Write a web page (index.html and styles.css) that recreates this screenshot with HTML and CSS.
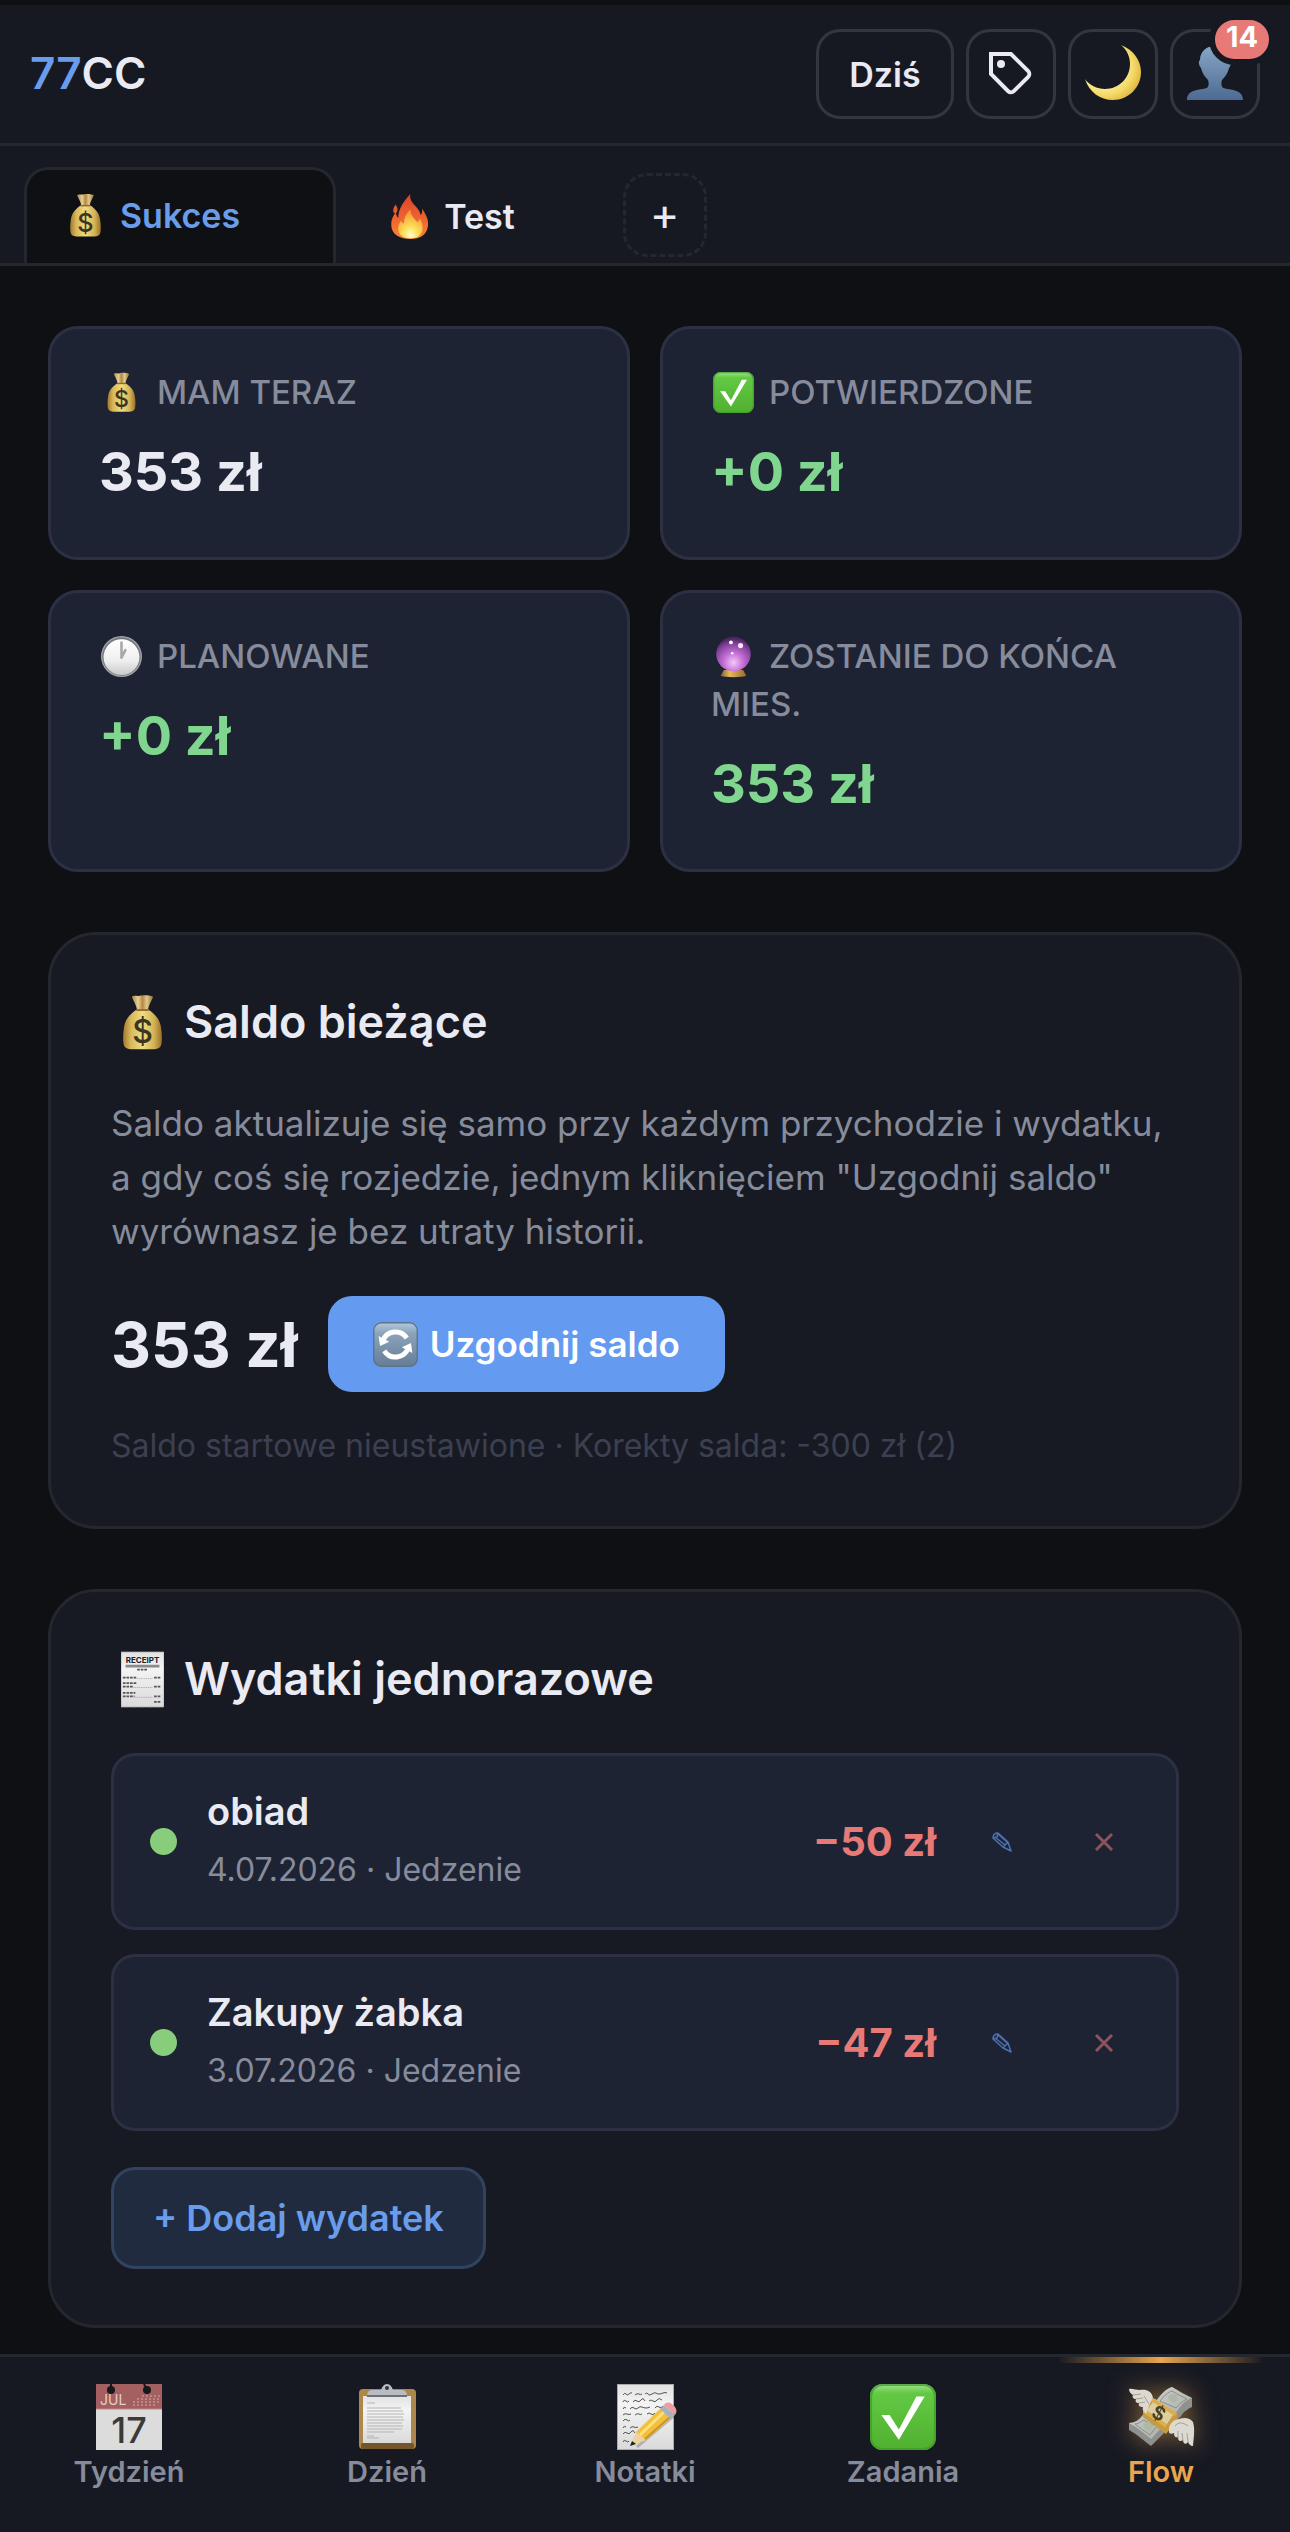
FILE: index.html
```html
<!DOCTYPE html>
<html lang="pl">

<head>
  <meta charset="UTF-8" />
  <meta name="viewport" content="width=device-width, initial-scale=1" />
  <title>77CC - Flow</title>
  <link rel="stylesheet" href="styles.css">
</head>

<body>
  <!-- Ikony używane w kilku miejscach -->
  <svg class="defs" width="0" height="0" aria-hidden="true">
    <defs>
      <linearGradient id="gBag" x1="0" x2="1" y1="0" y2="0">
        <stop offset="0" stop-color="#a37a2c" />
        <stop offset="0.2" stop-color="#d8b85c" />
        <stop offset="0.5" stop-color="#f0dc82" />
        <stop offset="0.8" stop-color="#d4b255" />
        <stop offset="1" stop-color="#9a7028" />
      </linearGradient>
      <linearGradient id="gNeck" x1="0" x2="1" y1="0" y2="0">
        <stop offset="0" stop-color="#b08848" />
        <stop offset="0.3" stop-color="#e6cf96" />
        <stop offset="0.5" stop-color="#b58a45" />
        <stop offset="0.7" stop-color="#e2c88c" />
        <stop offset="1" stop-color="#99702f" />
      </linearGradient>
      <linearGradient id="gCheck" x1="0" x2="0" y1="0" y2="1">
        <stop offset="0" stop-color="#a2e090" />
        <stop offset="0.14" stop-color="#62c944" />
        <stop offset="1" stop-color="#50b02f" />
      </linearGradient>
      <linearGradient id="gFire" x1="0" x2="0" y1="0" y2="1">
        <stop offset="0" stop-color="#d9432c" />
        <stop offset="0.6" stop-color="#f0672f" />
        <stop offset="1" stop-color="#f58a38" />
      </linearGradient>
      <radialGradient id="gFlame" cx="0.5" cy="0.9" r="0.8">
        <stop offset="0" stop-color="#fffbd8" />
        <stop offset="0.35" stop-color="#fde45c" />
        <stop offset="1" stop-color="#f59a35" />
      </radialGradient>
      <radialGradient id="gMoon" cx="0.35" cy="0.4" r="0.7">
        <stop offset="0.5" stop-color="#fbec9a" />
        <stop offset="0.75" stop-color="#f3d863" />
        <stop offset="1" stop-color="#dcb13f" />
      </radialGradient>
      <linearGradient id="gUser" x1="0" x2="0" y1="0" y2="1">
        <stop offset="0" stop-color="#86a7c6" />
        <stop offset="1" stop-color="#4d6a92" />
      </linearGradient>
      <radialGradient id="gBall" cx="0.5" cy="0.75" r="0.7">
        <stop offset="0" stop-color="#f3c8fa" />
        <stop offset="0.4" stop-color="#c570d6" />
        <stop offset="0.8" stop-color="#82409a" />
        <stop offset="1" stop-color="#4b2660" />
      </radialGradient>
      <linearGradient id="gGold" x1="0" x2="1" y1="0" y2="0">
        <stop offset="0" stop-color="#8a6128" />
        <stop offset="0.35" stop-color="#e6b95c" />
        <stop offset="1" stop-color="#96692c" />
      </linearGradient>
      <linearGradient id="gClock" x1="0" x2="0" y1="0" y2="1">
        <stop offset="0" stop-color="#ffffff" />
        <stop offset="0.6" stop-color="#efefef" />
        <stop offset="1" stop-color="#c9c9c9" />
      </linearGradient>
      <linearGradient id="gSync" x1="0" x2="0" y1="0" y2="1">
        <stop offset="0" stop-color="#b4cade" />
        <stop offset="0.25" stop-color="#8ba4bb" />
        <stop offset="1" stop-color="#647c94" />
      </linearGradient>
      <linearGradient id="gPaper" x1="0" x2="0" y1="0" y2="1">
        <stop offset="0" stop-color="#e2e2e2" />
        <stop offset="0.3" stop-color="#f4f4f4" />
        <stop offset="1" stop-color="#dadada" />
      </linearGradient>
      <linearGradient id="gBill" x1="0" x2="1" y1="0" y2="1">
        <stop offset="0" stop-color="#d8dad4" />
        <stop offset="1" stop-color="#9fa19f" />
      </linearGradient>

      <symbol id="bag" viewBox="0 0 64 64">
        <path d="M20 3c3-2 6 0 9-1s10-1 15 1c-2 5-5 9-6 15H26c-1-6-4-10-6-15z" fill="url(#gNeck)" />
        <path d="M26 17h12c9 6 14 12 15 22 1 7 1 14 0 18-1 4-5 5-9 5H20c-4 0-8-1-9-5-1-4-1-11 0-18 1-10 6-16 15-22z" fill="url(#gBag)" />
        <path d="M25 18h14" stroke="#8e6526" stroke-width="2" />
        <text x="32" y="55" text-anchor="middle" class="bag-sign">$</text>
      </symbol>

      <symbol id="check" viewBox="0 0 64 64">
        <rect x="0" y="0" width="64" height="64" rx="12" fill="url(#gCheck)" />
        <rect x="1" y="1" width="62" height="62" rx="11" fill="none" stroke="#3f9a26" stroke-width="2" opacity="0.7" />
        <path d="M11 30h8l9 14 17-32h8L28 54z" fill="#fff" />
      </symbol>

      <symbol id="pencil" viewBox="0 0 20 20">
        <path d="M1 6c0-3 2-5 5-5l10 9 3 9-8-4zM16 10l-5 5M3 5l10 8M6 2l9 8M1 6l4-1 1-4" fill="none" stroke="currentColor" stroke-width="1.5" stroke-linejoin="round" />
      </symbol>

      <symbol id="cross" viewBox="0 0 20 20">
        <path d="M2 2l16 16M18 2L2 18" stroke="currentColor" stroke-width="3" />
      </symbol>
    </defs>
  </svg>

  <header class="topbar">
    <div class="logo"><span>77</span>CC</div>
    <div class="actions">
      <button type="button" class="btn-top btn-today">Dziś</button>
      <button type="button" class="btn-top" aria-label="Etykiety">
        <svg class="icon-tag" viewBox="0 0 24 24" fill="none" stroke="currentColor" stroke-width="2">
          <path d="M20.6 13.4l-7.2 7.2a2 2 0 0 1-2.8 0L2 12V2h10l8.6 8.6a2 2 0 0 1 0 2.8z" />
          <circle cx="7" cy="7" r="2" fill="currentColor" stroke="none" />
        </svg>
      </button>
      <button type="button" class="btn-top" aria-label="Motyw">
        <svg class="icon-top" viewBox="0 0 56 56">
          <path d="M36-1c13 5 20 16 20 27 0 15-12 28-28 28C15 54 4 46 0 33c4 6 12 10 20 10 14 0 25-11 25-25 0-7-3-14-9-19z" fill="url(#gMoon)" />
        </svg>
      </button>
      <button type="button" class="btn-top" aria-label="Konto">
        <svg class="icon-top" viewBox="0 0 56 56">
          <path d="M28 0c9 0 15 6 15 14 2 1 1 6-1 8-1 5-4 9-7 12-1 3-1 6 1 8 7 2 20 1 20 12H0c0-11 13-10 20-12 2-2 2-5 1-8-3-3-6-7-7-12-2-2-3-7-1-8 0-8 6-14 15-14z" fill="url(#gUser)" />
        </svg>
        <span class="badge">14</span>
      </button>
    </div>
  </header>

  <div class="tabs">
    <button type="button" class="tab active">
      <svg class="icon-tab"><use href="#bag" /></svg>
      Sukces
    </button>
    <button type="button" class="tab">
      <svg class="icon-tab" viewBox="0 0 64 64">
        <path d="M33 0c-1 9 4 13 9 19 3 4 5 7 6 11 2-2 2-5 2-9 6 9 10 17 8 26-2 11-11 17-24 17C18 64 6 58 6 43c0-7 3-12 6-17 1 3 2 6 4 8 0-13 8-24 17-34zM12 15c3 4 4 7 2 11-3 3-6 0-5-4 0-3 2-4 3-7z" fill="url(#gFire)" />
        <path d="M33 22c1 10 6 12 10 18 2-1 3-3 4-5 4 8 5 14 2 20-3 6-9 8-16 8-9 0-17-4-17-14 0-5 2-8 4-11 1 2 2 3 4 4 0-8 3-14 9-20z" fill="url(#gFlame)" />
      </svg>
      Test
    </button>
    <button type="button" class="tab-add" aria-label="Dodaj zakładkę">+</button>
  </div>

  <main>
    <section class="stats">
      <div class="stat">
        <h3><svg class="icon-label"><use href="#bag" /></svg>MAM TERAZ</h3>
        <p>353 zł</p>
      </div>
      <div class="stat">
        <h3><svg class="icon-label"><use href="#check" /></svg>POTWIERDZONE</h3>
        <p class="plus">+0 zł</p>
      </div>
      <div class="stat">
        <h3><svg class="icon-label" viewBox="0 0 64 64">
            <circle cx="32" cy="32" r="32" fill="#a3a6ab" />
            <circle cx="32" cy="32" r="30" fill="#74787f" />
            <circle cx="32" cy="33" r="28" fill="url(#gClock)" />
            <path d="M32 10v24l6-12" fill="none" stroke="#a8a8a8" stroke-width="4" stroke-linecap="round" stroke-linejoin="round" />
          </svg>PLANOWANE</h3>
        <p class="plus">+0 zł</p>
      </div>
      <div class="stat">
        <h3><svg class="icon-label" viewBox="0 0 64 64">
            <path d="M17 53h30l5 9c-8 3-32 3-40 0z" fill="url(#gGold)" />
            <circle cx="32" cy="28" r="27" fill="url(#gBall)" />
            <circle cx="28" cy="10" r="3" fill="#fff" />
            <circle cx="43" cy="15" r="4" fill="#fbe8ff" />
            <circle cx="30" cy="27" r="2" fill="#fff" />
          </svg>ZOSTANIE DO KOŃCA MIES.</h3>
        <p class="plus">353 zł</p>
      </div>
    </section>

    <section class="panel">
      <h2><svg class="icon-title"><use href="#bag" /></svg>Saldo bieżące</h2>
      <p class="desc">Saldo aktualizuje się samo przy każdym przychodzie i wydatku, a gdy coś się rozjedzie, jednym kliknięciem "Uzgodnij saldo" wyrównasz je bez utraty historii.</p>
      <div class="balance">
        <strong>353 zł</strong>
        <button type="button" class="btn-primary">
          <svg class="icon-tab" viewBox="0 0 64 64">
            <rect x="0" y="0" width="64" height="64" rx="12" fill="url(#gSync)" />
            <rect x="1" y="1" width="62" height="62" rx="11" fill="none" stroke="#5c7590" stroke-width="2" />
            <path d="M14 27a19 19 0 0 1 34-4M50 37a19 19 0 0 1-34 4" fill="none" stroke="#fff" stroke-width="7" />
            <path d="M8 20l2 14 13-6zM56 44l-2-14-13 6z" fill="#fff" />
          </svg>
          Uzgodnij saldo
        </button>
      </div>
      <p class="note">Saldo startowe nieustawione · Korekty salda: -300 zł (2)</p>
    </section>

    <section class="panel">
      <h2><svg class="icon-title" viewBox="0 0 64 64">
          <rect x="8" y="1" width="48" height="62" fill="url(#gPaper)" />
          <path d="M8 1h48M8 63h48" stroke="#8b8b8b" stroke-width="1" stroke-dasharray="2 1" />
          <text x="32" y="14" text-anchor="middle" class="receipt-text">RECEIPT</text>
          <path d="M13 17h38" stroke="#8a8a8a" stroke-width="3" />
          <path d="M26 21h12M10 30h16M45 30h8M10 36h15M10 40h11M45 40h8M10 47h14M10 51h13M45 51h8M45 57h8" stroke="#555" stroke-width="2" stroke-dasharray="3 1" />
          <path d="M26 31h18M22 41h22M24 52h20" stroke="#999" stroke-width="1" stroke-dasharray="1 1" />
        </svg>Wydatki jednorazowe</h2>
      <ul class="expenses">
        <li>
          <span class="dot"></span>
          <div class="info">
            <h4>obiad</h4>
            <p>4.07.2026 · Jedzenie</p>
          </div>
          <span class="amount">−50 zł</span>
          <button type="button" class="btn-row edit" aria-label="Edytuj"><svg><use href="#pencil" /></svg></button>
          <button type="button" class="btn-row delete" aria-label="Usuń"><svg><use href="#cross" /></svg></button>
        </li>
        <li>
          <span class="dot"></span>
          <div class="info">
            <h4>Zakupy żabka</h4>
            <p>3.07.2026 · Jedzenie</p>
          </div>
          <span class="amount">−47 zł</span>
          <button type="button" class="btn-row edit" aria-label="Edytuj"><svg><use href="#pencil" /></svg></button>
          <button type="button" class="btn-row delete" aria-label="Usuń"><svg><use href="#cross" /></svg></button>
        </li>
      </ul>
      <button type="button" class="btn-add">+ Dodaj wydatek</button>
    </section>
  </main>

  <nav class="bottom-nav">
    <a href="#tydzien">
      <svg class="icon-nav" viewBox="0 0 66 66">
        <rect width="66" height="66" fill="#dcdcdc" />
        <rect width="66" height="25" fill="#a45f60" />
        <path d="M0 25h66" stroke="#bf8484" stroke-width="1" />
        <circle cx="15" cy="6" r="4" fill="#17181d" />
        <circle cx="51" cy="6" r="4" fill="#17181d" />
        <path d="M15 6V0M51 6l-3-6" stroke="#17181d" stroke-width="2" />
        <path d="M46 12h18M41 15h23M37 18h26M37 21h23" stroke="#bd8585" stroke-width="2" stroke-dasharray="2 2" />
        <text x="4" y="21" class="cal-month">JUL</text>
        <text x="33" y="59" text-anchor="middle" class="cal-day">17</text>
      </svg>
      Tydzień
    </a>
    <a href="#dzien">
      <svg class="icon-nav" viewBox="0 0 66 66">
        <rect x="5" y="5" width="57" height="60" rx="4" fill="#ad864c" />
        <rect x="7" y="59" width="53" height="6" rx="2" fill="#76552a" />
        <rect x="9" y="12" width="48" height="47" fill="url(#gPaper)" />
        <path d="M13 12c0-4 2-6 6-6h8c1-3 3-6 6-6s5 3 6 6h8c4 0 6 2 6 6z" fill="#b9bcc2" />
        <path d="M13 12h40" stroke="#6d7075" stroke-width="2" />
        <circle cx="33" cy="4" r="2" fill="#30343a" />
        <path d="M13 19h8M13 24h34M13 27h36M13 30h37M13 33h36M13 36h37M13 39h35M13 42h36M13 45h35M13 48h27M13 52h7M13 54h12" stroke="#b4b4b4" stroke-width="1" />
      </svg>
      Dzień
    </a>
    <a href="#notatki">
      <svg class="icon-nav" viewBox="0 0 66 66">
        <rect x="5" y="0" width="57" height="66" fill="#a9aaab" />
        <rect x="6" y="1" width="55" height="64" fill="url(#gPaper)" />
        <path d="M11 11q2-3 3-1t3 0 3-1M23 11q2-2 4-1t3 0M33 10q2-2 3 0t4 0 4-1 3 1 4-1 4 0M11 18q1-3 3-1t3 0M21 18q2-3 4-1t4-1 4 1M37 17q2-2 4 0t4-1 5 0M11 25q1-3 3-1M18 25q2-3 4-1t4 0 4-1 4 1 4-1M43 24q2-3 4-1t4-1M11 31q2-2 4-1t4 0M23 31q2-2 4-1t3 0M35 30q2-2 4 0t4-1M11 37q2-3 4-1t3 0M11 44q1-3 3-1M18 44q2-2 4-1t4 0M11 50q2-3 4-1t4-1 4 1M11 58q1-3 3-1t3 0" fill="none" stroke="#555" stroke-width="1" />
        <path d="M24 62l36-34 4 4-38 32z" fill="#000" opacity="0.2" />
        <path d="M18 62l6-14 10 8z" fill="#ecd3a0" />
        <path d="M18 62l2-5 4 3z" fill="#222" />
        <path d="M24 48l25-24 10 10-25 22z" fill="#f0c03e" />
        <path d="M28 51l25-24" stroke="#ffe07a" stroke-width="3" />
        <path d="M33 55l25-22" stroke="#cf9326" stroke-width="2" />
        <path d="M48 25l4-4 11 10-4 4z" fill="#a8b1c0" />
        <path d="M52 21c2-3 5-3 8-1 4 3 6 7 3 11z" fill="#ec9da2" />
      </svg>
      Notatki
    </a>
    <a href="#zadania">
      <svg class="icon-nav"><use href="#check" /></svg>
      Zadania
    </a>
    <a href="#flow" class="active">
      <svg class="icon-nav" viewBox="0 0 66 66">
        <path d="M28 17c5-6 9-12 16-14 7 4 13 8 20 11v9c-4 2-8 4-11 9L23 62C16 57 9 50 1 46v-7c6 0 10-3 13-7z" fill="#8f918f" />
        <path d="M28 17c5-6 9-12 16-14 7 4 13 8 20 11-6 2-10 6-14 12L23 55C17 50 9 43 1 39c6 0 10-3 13-7z" fill="url(#gBill)" />
        <path d="M32 17c4-5 8-9 12-10 6 4 11 6 15 8-4 2-8 5-11 9zM15 36c-2 2-5 4-8 4 5 4 11 8 15 11l7-9z" fill="none" stroke="#898f86" stroke-width="1" />
        <ellipse cx="45" cy="14" rx="5" ry="4" fill="#aeb8a6" transform="rotate(25 45 14)" />
        <ellipse cx="20" cy="42" rx="5" ry="4" fill="#aeb8a6" transform="rotate(25 20 42)" />
        <path d="M25 14l24 15v7l-11 14-23-17V27z" fill="#c79a3e" />
        <path d="M27 15l20 13-10 15-20-14z" fill="#ddcf9f" />
        <path d="M25 14l24 15-2 3-24-15zM18 26l21 14-2 3-20-13z" fill="#dcae4b" />
        <text x="31" y="36" text-anchor="middle" class="bill-sign" transform="rotate(28 31 29)">$</text>
        <path d="M25 14c-1-7-7-9-13-8C8 6 4 4 1 5c0 3 2 5 4 6-1 2 0 4 3 4-1 3 0 4 3 4-1 3 1 4 4 4-1 3 1 5 3 7 2-6 4-11 7-16z" fill="#dcd9d0" />
        <path d="M5 11l8-1M8 15l7-1M11 19l6-1M16 12l5 8" stroke="#a5a096" stroke-width="1" fill="none" />
        <path d="M41 48c-1-8 4-12 10-13 6-2 11-1 14 3 2 7 1 14 0 24-3 0-4-2-5-4-2 3-5 2-5-2-3 2-5 1-5-3-3 1-4-1-4-4-2 1-5 1-5-1z" fill="#dcd9d0" />
        <path d="M60 58l-1-9M55 57l-1-8M50 54v-7M47 42c3-4 8-4 13 0" stroke="#a5a096" stroke-width="1" fill="none" />
      </svg>
      Flow
    </a>
  </nav>
</body>

</html>
```
FILE: styles.css
```css
* {
  margin: 0;
  padding: 0;
  box-sizing: border-box;
  font-family: Inter, 'Liberation Sans', sans-serif;
}

body {
  background-color: #0f1014;
  color: #e9eaf2;
  min-height: 100vh;
  display: flex;
  flex-direction: column;
  padding-top: 5px;
}

svg {
  display: block;
  flex-shrink: 0;
  overflow: visible;
}

.defs {
  position: absolute;
}

button {
  border: none;
  background: none;
  color: inherit;
  cursor: pointer;
}

/* Nagłówek */
.topbar {
  display: flex;
  justify-content: space-between;
  align-items: center;
  padding: 24px 30px;
  background-color: #171922;
  border-bottom: 3px solid #25272f;
}

.logo {
  padding-bottom: 3px;
  font-size: 44px;
  font-weight: 600;
}

.logo span {
  color: #6a9cec;
}

.actions {
  display: flex;
  gap: 12px;
}

.btn-top {
  position: relative;
  display: flex;
  justify-content: center;
  align-items: center;
  width: 90px;
  height: 90px;
  border: 3px solid #34353f;
  border-radius: 24px;
}

.btn-today {
  width: 138px;
  font-size: 34px;
  font-weight: 600;
}

.icon-tag {
  width: 48px;
  height: 48px;
}

.icon-top {
  width: 56px;
  height: 56px;
}

.badge {
  position: absolute;
  top: -18px;
  right: -18px;
  min-width: 66px;
  height: 51px;
  border: 6px solid #171922;
  border-radius: 26px;
  background-color: #e77a77;
  color: #fff;
  font-size: 29px;
  font-weight: 700;
  line-height: 34px;
  text-align: center;
}

/* Zakładki */
.tabs {
  display: flex;
  align-items: center;
  gap: 12px;
  padding: 21px 24px 0;
  background-color: #171922;
  border-bottom: 3px solid #25272f;
}

.tab {
  display: flex;
  align-items: center;
  gap: 12px;
  height: 96px;
  padding: 0 93px 0 36px;
  border: 3px solid transparent;
  border-bottom: none;
  border-radius: 24px 24px 0 0;
  font-size: 34px;
  font-weight: 600;
}

.tab.active {
  padding-bottom: 3px;
  background-color: #0f1014;
  border-color: #25272f;
  color: #6a9cec;
}

.icon-tab {
  width: 45px;
  height: 45px;
}

.tab-add {
  width: 84px;
  height: 84px;
  padding-bottom: 4px;
  border: 3px dashed #25272f;
  border-radius: 24px;
  font-size: 45px;
}

main {
  display: flex;
  flex-direction: column;
  gap: 60px;
  padding: 60px 48px 24px;
}

/* Kafelki z podsumowaniem */
.stats {
  display: grid;
  grid-template-columns: 1fr 1fr;
  gap: 30px;
}

.stat {
  padding: 39px 48px 54px;
  background-color: #1e2333;
  border: 3px solid #2c3042;
  border-radius: 30px;
}

.stat h3 {
  font-size: 33px;
  font-weight: 500;
  line-height: 48px;
  color: #878c9d;
}

.stat p {
  margin-top: 24px;
  font-size: 54px;
  font-weight: 700;
  line-height: 63px;
}

.stat .plus {
  color: #80d68e;
}

.icon-label {
  display: inline-block;
  width: 41px;
  height: 41px;
  margin: 0 15px 0 2px;
  vertical-align: -9px;
}

/* Panele */
.panel {
  padding: 57px 60px 56px;
  background-color: #171a23;
  border: 3px solid #25272f;
  border-radius: 48px;
}

.panel h2 {
  display: flex;
  align-items: center;
  gap: 13px;
  margin-bottom: 44px;
  padding-left: 3px;
  font-size: 45px;
  font-weight: 600;
  line-height: 60px;
}

.icon-title {
  width: 57px;
  height: 57px;
}

.desc {
  font-size: 35px;
  line-height: 54px;
  color: #878c9d;
}

.balance {
  display: flex;
  align-items: center;
  gap: 30px;
  margin: 38px 0 30px;
}

.balance strong {
  font-size: 62px;
  font-weight: 700;
}

.btn-primary {
  display: flex;
  align-items: center;
  gap: 12px;
  height: 96px;
  padding: 0 45px;
  border-radius: 24px;
  background-color: #649bf0;
  color: #fff;
  font-size: 35px;
  font-weight: 600;
}

.note {
  font-size: 32px;
  line-height: 48px;
  color: #3c4050;
}

.expenses {
  display: flex;
  flex-direction: column;
  gap: 24px;
  list-style: none;
}

.expenses li {
  display: flex;
  align-items: center;
  gap: 18px;
  padding: 27px 30px 27px 36px;
  background-color: #1e2333;
  border: 3px solid #2c3042;
  border-radius: 24px;
}

.dot {
  width: 27px;
  height: 27px;
  margin-right: 12px;
  border-radius: 50%;
  background-color: #87cd7b;
}

.info {
  flex: 1;
}

.info h4 {
  font-size: 38px;
  font-weight: 600;
  line-height: 56px;
}

.info p {
  font-size: 32px;
  line-height: 61px;
  color: #878c9d;
}

.amount {
  margin-right: 6px;
  font-size: 40px;
  font-weight: 700;
  color: #e77a77;
}

.btn-row {
  display: flex;
  justify-content: center;
  align-items: center;
  width: 84px;
  height: 84px;
}

.btn-row svg {
  width: 20px;
  height: 20px;
}

.edit {
  color: #4d70b0;
}

.delete {
  color: #8c535c;
}

.btn-add {
  display: block;
  height: 102px;
  margin-top: 36px;
  padding: 0 39px;
  border: 3px solid #32435f;
  border-radius: 24px;
  background-color: #212b3f;
  color: #6a9cec;
  font-size: 36px;
  font-weight: 600;
}

/* Dolna nawigacja */
.bottom-nav {
  position: sticky;
  bottom: 0;
  display: flex;
  margin-top: auto;
  background-color: #171922;
  border-top: 3px solid #25272f;
}

.bottom-nav a {
  position: relative;
  flex: 1;
  display: flex;
  flex-direction: column;
  align-items: center;
  gap: 4px;
  padding: 27px 0 42px;
  color: #878c9d;
  font-size: 29px;
  font-weight: 600;
  line-height: 36px;
  text-decoration: none;
}

.bottom-nav .active {
  color: #e8a64e;
}

.bottom-nav .active::before {
  content: '';
  position: absolute;
  top: 0;
  left: 10%;
  width: 80%;
  height: 6px;
  background: linear-gradient(to right, transparent, #e8a64e, transparent);
}

.bottom-nav .active svg {
  filter: drop-shadow(0 0 12px rgba(232, 166, 78, 0.5));
}

.icon-nav {
  width: 66px;
  height: 66px;
}

/* Znaki wewnątrz ikon */
.bag-sign {
  font-size: 36px;
  font-weight: 500;
  fill: #3d3520;
}

.receipt-text {
  font-size: 9px;
  font-weight: 700;
  fill: #222;
}

.cal-month {
  font-size: 14px;
  font-weight: 400;
  fill: #e4cccc;
}

.cal-day {
  font-size: 36px;
  font-weight: 500;
  fill: #3a3a3a;
}

.bill-sign {
  font-size: 19px;
  font-weight: 700;
  fill: #4a4228;
}
```
